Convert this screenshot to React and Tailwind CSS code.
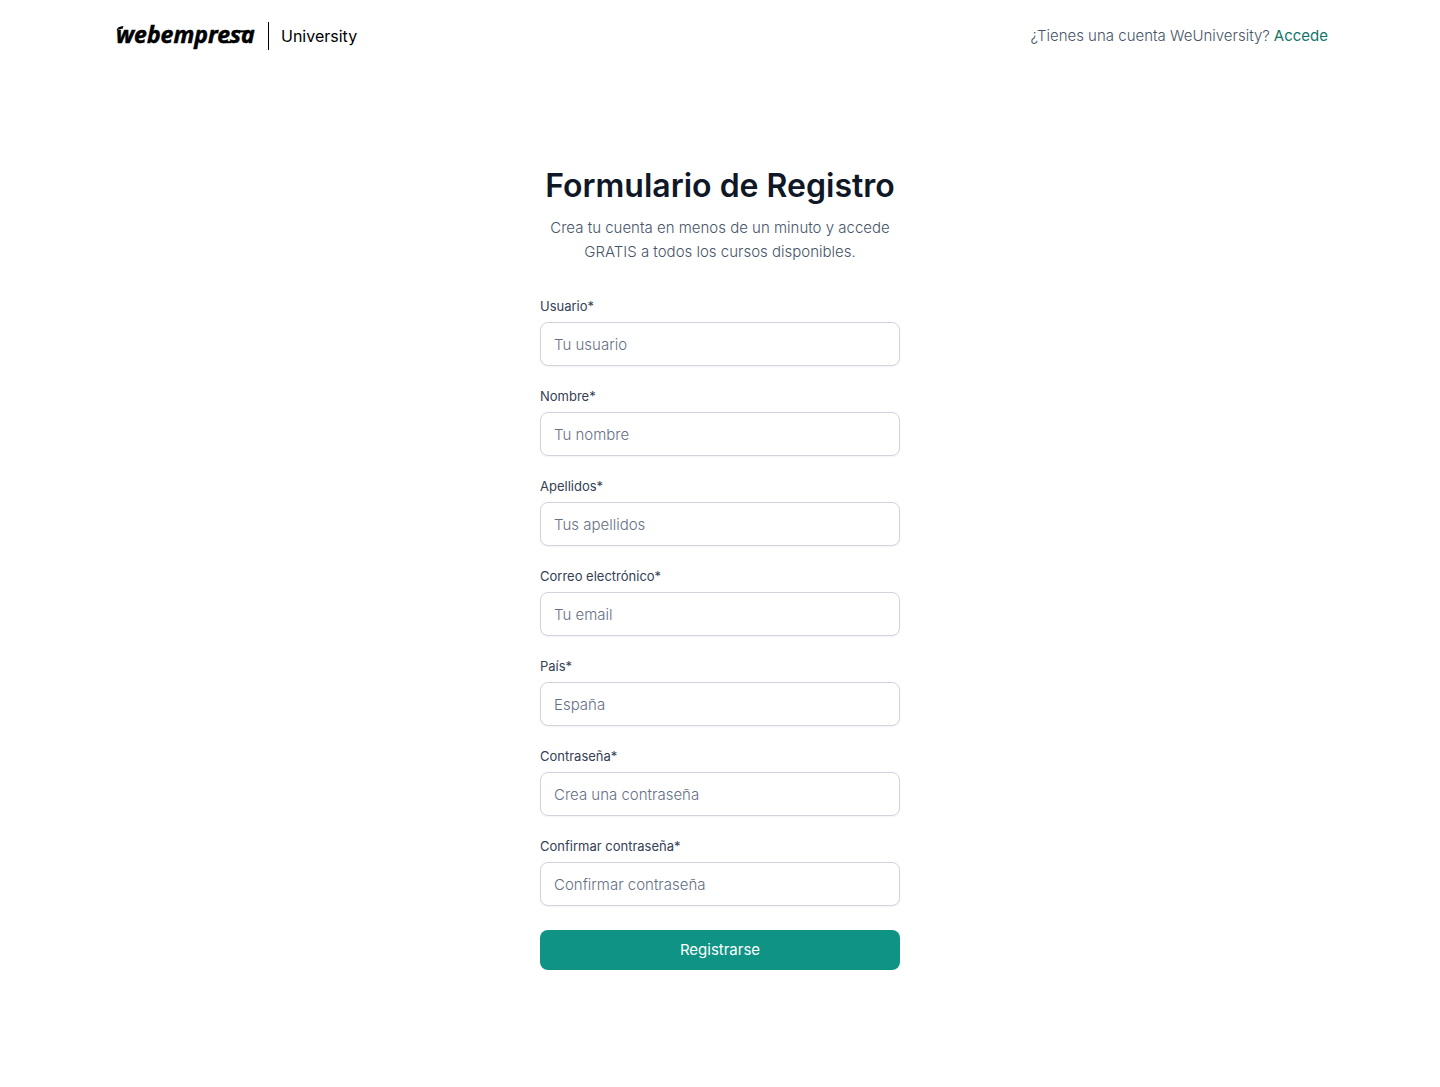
const fields = [
  { id: "username", label: "Usuario*", placeholder: "Tu usuario", type: "text" },
  { id: "name", label: "Nombre*", placeholder: "Tu nombre", type: "text" },
  { id: "surname", label: "Apellidos*", placeholder: "Tus apellidos", type: "text" },
  { id: "email", label: "Correo electrónico*", placeholder: "Tu email", type: "email" },
  { id: "country", label: "País*", placeholder: "España", type: "text" },
  { id: "password", label: "Contraseña*", placeholder: "Crea una contraseña", type: "password" },
  { id: "confirm", label: "Confirmar contraseña*", placeholder: "Confirmar contraseña", type: "password" },
];

function Logo() {
  return (
    <a href="#" className="flex items-center gap-3 text-black">
      <svg width="144" height="32" viewBox="0 0 144 32" className="overflow-visible" fill="currentColor">
        <text x="4" y="23" className="font-['Noto_Sans'] text-[23px] font-bold italic" stroke="currentColor" strokeWidth="0.5">
          webempresa
        </text>
        {/* swoosh over the w and the bars tying the last letters */}
        <path d="M4.5 10.5C5 7.8 7.2 6.2 11.5 6L10.6 8.8C7.8 8.9 6.2 9.4 4.5 10.5Z" />
        <path d="M127 11.4H137" stroke="currentColor" strokeWidth="2" />
        <path d="M111 22.2H119" stroke="currentColor" strokeWidth="2" />
      </svg>
      <span className="h-7 w-px bg-black" />
      <span className="text-base leading-5">University</span>
    </a>
  );
}

export default function App() {
  return (
    <div className="min-h-screen bg-white font-['Inter',sans-serif] text-[#475467]">
      <header className="mx-auto flex h-[72px] max-w-7xl items-center justify-between px-8">
        <Logo />
        <p className="flex items-center gap-1 text-[15px] font-light">
          ¿Tienes una cuenta WeUniversity?
          <a href="#" className="font-normal text-[#107569]">Accede</a>
        </p>
      </header>

      <main className="px-4 pt-24 pb-24">
        <div className="mx-auto max-w-[360px]">
          <h1 className="text-center text-[32px] leading-9 font-semibold whitespace-nowrap text-[#101828]">
            Formulario de Registro
          </h1>
          <p className="mt-3 text-center text-[15px] leading-6 font-light">
            Crea tu cuenta en menos de un minuto y accede GRATIS a todos los cursos disponibles.
          </p>

          <form className="mt-8" onSubmit={(e) => e.preventDefault()}>
            <div className="flex flex-col gap-5">
              {fields.map((f) => (
                <div key={f.id} className="flex flex-col gap-1.5">
                  <label htmlFor={f.id} className="text-[13px] leading-5 text-[#344054]">
                    {f.label}
                  </label>
                  <input
                    id={f.id}
                    type={f.type}
                    placeholder={f.placeholder}
                    className="h-11 w-full rounded-lg border border-[#d0d5dd] bg-white px-[13px] text-[15px] font-light shadow-xs placeholder:text-[#667085]"
                  />
                </div>
              ))}
            </div>
            <button type="submit" className="mt-6 h-10 w-full rounded-lg bg-[#0e9384] text-[15px] font-normal text-white">
              Registrarse
            </button>
          </form>
        </div>
      </main>
    </div>
  );
}
